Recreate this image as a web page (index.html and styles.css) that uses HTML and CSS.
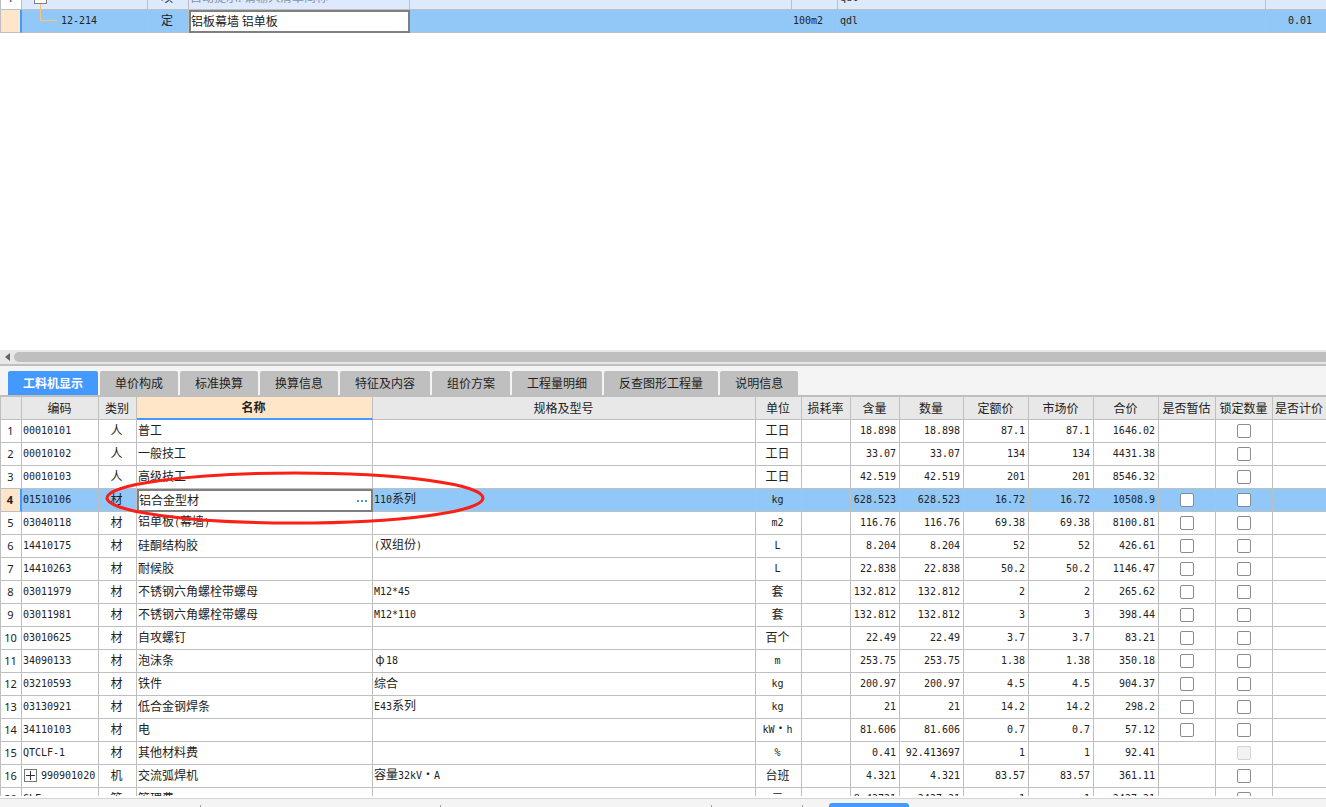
FILE: index.html
```html
<!DOCTYPE html>
<html lang="zh-CN">
<head>
<meta charset="utf-8">
<title>工料机显示</title>
<link rel="stylesheet" href="styles.css">
</head>
<body>
<main class="app">
  <section class="upper">
    <table class="grid bill" aria-label="清单">
      <colgroup><col class="w-gut"><col class="w-bcode"><col class="w-bkind"><col class="w-bname"><col><col class="w-bunit"><col class="w-bexpr"><col class="w-bqty"></colgroup>
      <tbody>
        <tr class="parent"><th scope="row">1</th><td></td><td class="c">项</td><td class="hint">自动提示: 请输入清单简称</td><td></td><td></td><td class="expr"><span class="n">qdl</span></td><td></td></tr>
        <tr class="current"><th scope="row"></th>
          <td class="tree"><svg class="branch" width="30" height="32" viewBox="0 0 30 32" aria-hidden="true"><path d="M12.500 13V29.500H29" fill="none" stroke="#fdc478"/><rect x="6.500" y=".500" width="12" height="12" fill="#fff" stroke="#808080"/></svg><span class="n">12-214</span></td>
          <td class="c">定</td><td class="editing"><input type="text" value="铝板幕墙 铝单板" aria-label="名称"></td><td></td><td class="n">100m2</td><td class="n expr">qdl</td><td class="n end">0.01</td></tr>
      </tbody>
    </table>
  </section>
  <div class="scroll"><button class="arrow" aria-label="向左滚动"></button><div class="thumb"></div></div>
  <nav class="tabs" role="tablist">
    <button role="tab" aria-selected="true" class="tab active">工料机显示</button>
    <button role="tab" class="tab">单价构成</button>
    <button role="tab" class="tab">标准换算</button>
    <button role="tab" class="tab">换算信息</button>
    <button role="tab" class="tab">特征及内容</button>
    <button role="tab" class="tab">组价方案</button>
    <button role="tab" class="tab">工程量明细</button>
    <button role="tab" class="tab">反查图形工程量</button>
    <button role="tab" class="tab">说明信息</button>
  </nav>
  <section class="lower">
    <table class="grid items" aria-label="工料机">
      <colgroup><col class="w-gut"><col class="w-code"><col class="w-kind"><col class="w-name"><col><col class="w-unit"><col class="w-rate"><col class="w-rate"><col class="w-qty"><col class="w-price"><col class="w-price"><col class="w-price"><col class="w-check"><col class="w-check"><col class="w-last"></colgroup>
      <thead><tr><th></th><th>编码</th><th>类别</th><th class="sorted">名称</th><th>规格及型号</th><th>单位</th><th>损耗率</th><th>含量</th><th>数量</th><th>定额价</th><th>市场价</th><th>合价</th><th>是否暂估</th><th>锁定数量</th><th>是否计价</th></tr></thead>
      <tbody id="rows"></tbody>
    </table>
    <svg class="ring" width="380" height="56" viewBox="0 0 380 56" aria-hidden="true"><ellipse cx="190" cy="28" rx="188" ry="25" fill="none" stroke="#fb2015" stroke-width="3"/></svg>
  </section>
  <footer class="status"><i class="tick"></i><i class="tick"></i><i class="tick"></i><i class="tick"></i><i class="pill"></i></footer>
</main>
<script src="app.js"></script>
</body>
</html>
```
FILE: styles.css
```css
* { box-sizing: border-box; }
body {
  margin: 0;
  background: #fff;
  color: #222;
  font: 12px/16px "Noto Sans CJK SC", sans-serif;
}
.app { display: flex; flex-direction: column; height: 100vh; overflow: hidden; }
.upper { flex: 1; overflow: hidden; min-height: 0; }
.grid { width: 100%; table-layout: fixed; border-collapse: separate; border-spacing: 0; }
.grid tr { height: 23px; }
.grid td, .grid th {
  height: 23px;
  padding: 0 2px 2px 1px;
  border: solid #bfbfbf;
  border-width: 0 1px 1px 0;
  white-space: nowrap;
  overflow: hidden;
  font-weight: 400;
  text-align: left;
  line-height: 16px;
}
.grid tr > :first-child { border-left-width: 1px; }
.grid tr > :last-child { border-right-width: 0; }
.grid tbody th { font: 11px/16px "Noto Sans", sans-serif; text-align: center; padding: 0 1px 0 0; }
.grid td.c { text-align: center; padding: 0 2px 2px 0; }
.grid td.check { padding: 0 0 2px; }
.grid thead th { text-align: center; padding: 0 1px 0 0; }
.grid .n { font-family: "DejaVu Sans Mono", "Noto Sans CJK SC", monospace; font-size: 10px; }
.grid td.n { padding-bottom: 0; }
.wide { display: inline-block; width: 12px; text-align: center; }
.grid td.end { text-align: right; padding-right: 3px; }
.w-gut { width: 22px; }
.w-bcode { width: 126px; }
.w-bkind { width: 41px; }
.w-bname { width: 221px; }
.w-bunit { width: 46px; }
.w-bexpr { width: 428px; }
.w-bqty { width: 60px; }
.w-code { width: 77px; }
.w-kind { width: 38px; }
.w-name { width: 236px; }
.w-unit { width: 46px; }
.w-rate { width: 49px; }
.w-qty { width: 64px; }
.w-price { width: 65px; }
.w-check { width: 57px; }
.w-last { width: 53px; }

.bill { margin-top: -13px; }
.parent td { background: #dde9fd; }
.grid td.hint { color: #8b93a0; }
.current td { background: #92c8f7; }
.grid .current th { background: #ffe6c8; border-right: 2px solid #4499ff; font-weight: 700; }
.grid td.expr { padding-left: 2px; }
.grid.bill td.end { padding-right: 14px; }
.grid td.tree { position: relative; padding-left: 39px; overflow: visible; }
.branch { position: absolute; left: 6px; bottom: 9px; }
.grid td.editing { background: #fff; padding: 0; border: 2px solid #7f7f7f; }
.field { display: flex; align-items: center; }
.editing input {
  display: block;
  width: 100%;
  height: 19px;
  border: 0;
  padding: 0 0 3px;
  background: #fff;
  color: #222;
  font: 12px/16px "Noto Sans CJK SC", sans-serif;
  outline: 0;
}
.more { border: 0; background: none; padding: 0 4px; display: flex; gap: 2px; }
.more i { width: 2px; height: 2px; background: #4a9ad4; }

.scroll { display: flex; align-items: center; height: 14px; flex: none; background: #e8e8e8; }
.arrow { width: 14px; height: 14px; padding: 0; border: 0; background: none; display: flex; align-items: center; justify-content: center; }
.arrow::before { content: ""; border: solid transparent; border-width: 4px 5px 4px 0; border-right-color: #666; }
.thumb { flex: 1; height: 10px; border-radius: 5px 0 0 5px; background: #bfbfbf; }
.tabs {
  display: flex;
  gap: 2px;
  flex: none;
  height: 33px;
  padding: 5px 8px 0;
  border-top: 2px solid #bfbfbf;
  border-bottom: 2px solid #bfbfbf;
  background: #f4f4f4;
}
.tab {
  height: 24px;
  padding: 0 15px;
  border: 0;
  border-radius: 2px 2px 0 0;
  background: #bfbfbf;
  color: #222;
  font: 12px/24px "Noto Sans CJK SC", sans-serif;
}
.tab.active { background: #4499ff; color: #fff; font-weight: 700; }
.lower { position: relative; flex: none; height: 401px; overflow: hidden; border-bottom: 2px solid #fff; }
.items thead th { background: #e8e8e8; }
.grid.items thead th.sorted { background: #ffe6c8; border-bottom: 2px solid #4499ff; padding: 0 2px 1px 0; font-weight: 700; }
.tog { display: inline-flex; align-items: center; justify-content: center; width: 13px; height: 13px; margin: 0 4px 0 1px; padding: 0; border: 1px solid #777; background: #fff; vertical-align: middle; }
.tog svg { display: block; flex: none; }
.box { appearance: none; display: block; width: 14px; height: 14px; margin: 2px auto 0; border: 1px solid #8c8c8c; border-radius: 2px; background: #fff; }
.box:disabled { border-color: #d4d4d4; background: #f2f2f2; }
.ring { position: absolute; left: 105px; top: 73px; }
.status { display: grid; grid-template-columns: 201px 240px 271px 91px 26px 80px; align-items: end; height: 9px; flex: none; border-top: 1px solid #d4d4d4; background: #f4f4f4; }
.tick { height: 2px; border-right: 1px solid #9a9aa5; }
.pill { grid-column: 6; height: 4px; border-radius: 3px 3px 0 0; background: #4499ff; }
```
FILE: app.js
```js
// code, kind, name, spec, unit, content, quantity, quota price, market price, total, checkboxes
const items = [
  ["1", "00010101", "人", "普工", "", "工日", "18.898", "18.898", "87.1", "87.1", "1646.02", "-o"],
  ["2", "00010102", "人", "一般技工", "", "工日", "33.07", "33.07", "134", "134", "4431.38", "-o"],
  ["3", "00010103", "人", "高级技工", "", "工日", "42.519", "42.519", "201", "201", "8546.32", "-o"],
  ["4", "01510106", "材", "铝合金型材", "110系列", "kg", "628.523", "628.523", "16.72", "16.72", "10508.9", "oo"],
  ["5", "03040118", "材", "铝单板(幕墙)", "", "m2", "116.76", "116.76", "69.38", "69.38", "8100.81", "oo"],
  ["6", "14410175", "材", "硅酮结构胶", "(双组份)", "L", "8.204", "8.204", "52", "52", "426.61", "oo"],
  ["7", "14410263", "材", "耐候胶", "", "L", "22.838", "22.838", "50.2", "50.2", "1146.47", "oo"],
  ["8", "03011979", "材", "不锈钢六角螺栓带螺母", "M12*45", "套", "132.812", "132.812", "2", "2", "265.62", "oo"],
  ["9", "03011981", "材", "不锈钢六角螺栓带螺母", "M12*110", "套", "132.812", "132.812", "3", "3", "398.44", "oo"],
  ["10", "03010625", "材", "自攻螺钉", "", "百个", "22.49", "22.49", "3.7", "3.7", "83.21", "oo"],
  ["11", "34090133", "材", "泡沫条", "φ18", "m", "253.75", "253.75", "1.38", "1.38", "350.18", "oo"],
  ["12", "03210593", "材", "铁件", "综合", "kg", "200.97", "200.97", "4.5", "4.5", "904.37", "oo"],
  ["13", "03130921", "材", "低合金钢焊条", "E43系列", "kg", "21", "21", "14.2", "14.2", "298.2", "oo"],
  ["14", "34110103", "材", "电", "", "kW·h", "81.606", "81.606", "0.7", "0.7", "57.12", "oo"],
  ["15", "QTCLF-1", "材", "其他材料费", "", "%", "0.41", "92.413697", "1", "1", "92.41", "-x"],
  ["16", "990901020", "机", "交流弧焊机", "容量32kV·A", "台班", "4.321", "4.321", "83.57", "83.57", "361.11", "-o"],
  ["20", "GLF", "管", "管理费", "", "元", "8.42721", "2427.21", "1", "1", "2427.21", "-o"]
];
const text = s => s.replace(/[\x20-\x7e]+|[·φ]/g, m =>
  /[·φ]/.test(m) ? `<span class="wide">${m}</span>` : `<span class="n">${m}</span>`);
const check = (c, label) => c === "-" ? "<td></td>" :
  `<td class="check"><input class="box" type="checkbox" aria-label="${label}"${c === "x" ? " disabled" : ""}></td>`;
const toggle = '<button class="tog" aria-label="展开"><svg width="9" height="9" viewBox="0 0 9 9"><path d="M4.500 0V9M0 4.500H9" stroke="#333"/></svg></button>';
document.getElementById("rows").innerHTML = items.map(r => {
  const [no, code, kind, name, spec, unit, ...rest] = r;
  const flags = rest.pop();
  const current = no === "4";
  const nameCell = current
    ? `<td class="editing"><div class="field"><input type="text" value="${name}" aria-label="名称"><button class="more" aria-label="更多"><i></i><i></i><i></i></button></div></td>`
    : `<td>${text(name)}</td>`;
  return `<tr${current ? ' class="current"' : ""}><th scope="row">${no}</th>` +
    `<td>${no === "16" ? toggle : ""}<span class="n">${code}</span></td>` +
    `<td class="c">${kind}</td>${nameCell}<td>${text(spec)}</td><td class="c">${text(unit)}</td><td></td>` +
    rest.map(v => `<td class="n end">${v}</td>`).join("") +
    check(flags[0], "是否暂估") + check(flags[1], "锁定数量") + "<td></td></tr>";
}).join("");
```
